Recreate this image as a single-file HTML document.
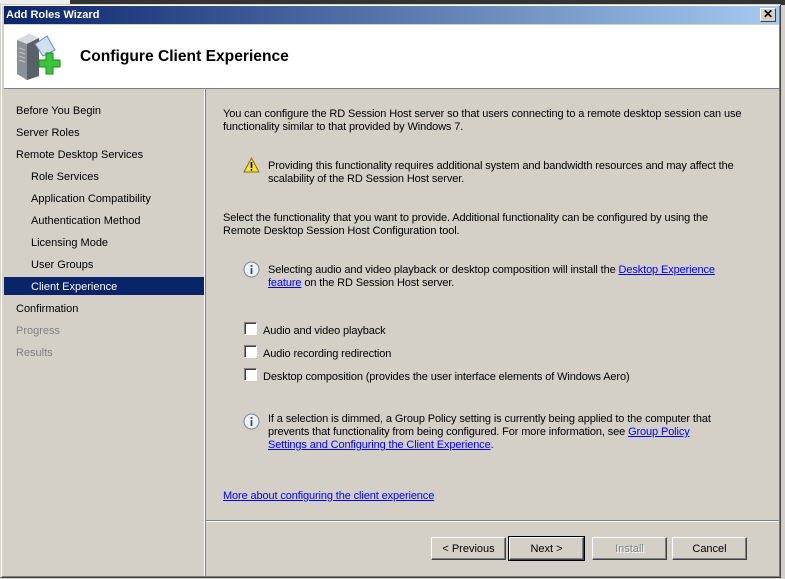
<!DOCTYPE html>
<html><head><style>
*{margin:0;padding:0;box-sizing:border-box}
body{width:785px;height:579px;background:#d4d0c8;font-family:"Liberation Sans",Tahoma,sans-serif;font-size:11px;color:#000;position:relative;overflow:hidden}
.a{position:absolute;white-space:nowrap;line-height:13px}
.r{font-size:11px;letter-spacing:-0.12px}
a,.l{color:#0000ff;text-decoration:underline}
.g{color:#808080}
.cb{position:absolute;width:13px;height:13px;background:#fff;border:1px solid;border-color:#808080 #fff #fff #808080;box-shadow:inset 1px 1px 0 #404040}
.btn{position:absolute;top:537px;height:23px;background:#d4d0c8;border:1px solid;border-color:#fff #404040 #404040 #fff;box-shadow:inset -1px -1px 0 #808080;text-align:center;line-height:22px;font-size:11px}
</style></head><body>
<div style="position:absolute;left:0;top:0;width:785px;height:5px;background:#333"></div>
<div style="position:absolute;left:0;top:0;width:70px;height:5px;background:#eee"></div>
<div style="position:absolute;left:0;top:4px;width:781px;height:574px;background:#d4d0c8;border:1px solid;border-color:#d4d0c8 #404040 #404040 #d4d0c8;box-shadow:inset 1px 1px 0 #fff,inset -1px -1px 0 #808080"></div>
<div style="position:absolute;left:4px;top:6px;width:775px;height:18px;background:linear-gradient(90deg,#0a246a,#a6caf0)"></div>
<div class="a" style="left:6px;top:9px;color:#fff;font-weight:bold;font-size:11px">Add Roles Wizard</div>
<div style="position:absolute;left:760px;top:8px;width:16px;height:14px;background:#d4d0c8;border:1px solid;border-color:#fff #404040 #404040 #fff;text-align:center;font-size:12px;line-height:11px;font-weight:bold">✕</div>
<div style="position:absolute;left:4px;top:25px;width:775px;height:63px;background:#fff"></div>
<svg style="position:absolute;left:14px;top:30px" width="50" height="52" viewBox="0 0 48 52">
<path d="M2 10 L14 4 L24 8 L24 46 L12 50 L2 44Z" fill="#8a9098"/>
<path d="M2 10 L14 4 L24 8 L12 14Z" fill="#d8dce0"/>
<path d="M12 14 L24 8 L24 46 L12 50Z" fill="#5a6068"/>
<g stroke="#c0c4c8" stroke-width="1"><line x1="4" y1="18" x2="10" y2="20"/><line x1="4" y1="22" x2="10" y2="24"/><line x1="4" y1="26" x2="10" y2="28"/><line x1="4" y1="30" x2="10" y2="32"/></g>
<path d="M20 14 L32 6 L40 20 L28 26Z" fill="#cfe0f0" stroke="#6a8ab0"/>
<path d="M24 30 h7 v-7 h7 v7 h7 v7 h-7 v7 h-7 v-7 h-7Z" fill="#3cc43c" stroke="#1a8a1a"/>
</svg>
<div class="a" style="left:80px;top:48px;font-size:15.6px;font-weight:bold;line-height:18px">Configure Client Experience</div>
<div style="position:absolute;left:4px;top:88px;width:775px;height:1px;background:#808080"></div>
<div style="position:absolute;left:204px;top:89px;width:1px;height:487px;background:#fff"></div>
<div style="position:absolute;left:205px;top:89px;width:1px;height:487px;background:#808080"></div>
<div class="a" style="left:16px;top:105px">Before You Begin</div>
<div class="a" style="left:16px;top:127px">Server Roles</div>
<div class="a" style="left:16px;top:149px">Remote Desktop Services</div>
<div class="a" style="left:31px;top:171px">Role Services</div>
<div class="a" style="left:31px;top:193px">Application Compatibility</div>
<div class="a" style="left:31px;top:215px">Authentication Method</div>
<div class="a" style="left:31px;top:237px">Licensing Mode</div>
<div class="a" style="left:31px;top:259px">User Groups</div>
<div style="position:absolute;left:4px;top:277px;width:200px;height:18px;background:#0a246a"></div>
<div class="a" style="left:31px;top:281px;color:#fff">Client Experience</div>
<div class="a" style="left:16px;top:303px">Confirmation</div>
<div class="a g" style="left:16px;top:325px">Progress</div>
<div class="a g" style="left:16px;top:347px">Results</div>
<div class="a r" style="left:223px;top:108px">You can configure the RD Session Host server so that users connecting to a remote desktop session can use<br>functionality similar to that provided by Windows 7.</div>
<svg style="position:absolute;left:243px;top:157px" width="17" height="16"><path d="M8.5 1 L16 15 H1Z" fill="#f8e040" stroke="#8a7000"/><rect x="7.7" y="5" width="1.6" height="6" fill="#000"/><rect x="7.7" y="12" width="1.6" height="1.6" fill="#000"/></svg>
<div class="a r" style="left:268px;top:160px">Providing this functionality requires additional system and bandwidth resources and may affect the<br>scalability of the RD Session Host server.</div>
<div class="a r" style="left:223px;top:212px">Select the functionality that you want to provide. Additional functionality can be configured by using the<br>Remote Desktop Session Host Configuration tool.</div>
<svg style="position:absolute;left:243px;top:261px" width="17" height="17"><circle cx="8.5" cy="8.5" r="7.5" fill="#f0f2f6" stroke="#7080a0"/><rect x="7.6" y="7" width="1.8" height="6" fill="#2a4a80"/><rect x="7.6" y="4" width="1.8" height="1.8" fill="#2a4a80"/></svg>
<div class="a r" style="left:268px;top:264px">Selecting audio and video playback or desktop composition will install the <span class="l">Desktop Experience</span><br><span class="l">feature</span> on the RD Session Host server.</div>
<div class="cb" style="left:244px;top:322px"></div>
<div class="a r" style="left:263px;top:325px">Audio and video playback</div>
<div class="cb" style="left:244px;top:345px"></div>
<div class="a r" style="left:263px;top:348px">Audio recording redirection</div>
<div class="cb" style="left:244px;top:368px"></div>
<div class="a r" style="left:263px;top:371px">Desktop composition (provides the user interface elements of Windows Aero)</div>
<svg style="position:absolute;left:243px;top:413px" width="17" height="17"><circle cx="8.5" cy="8.5" r="7.5" fill="#f0f2f6" stroke="#7080a0"/><rect x="7.6" y="7" width="1.8" height="6" fill="#2a4a80"/><rect x="7.6" y="4" width="1.8" height="1.8" fill="#2a4a80"/></svg>
<div class="a r" style="left:268px;top:413px">If a selection is dimmed, a Group Policy setting is currently being applied to the computer that<br>prevents that functionality from being configured. For more information, see <span class="l">Group Policy</span><br><span class="l">Settings and Configuring the Client Experience</span>.</div>
<div class="a l r" style="left:223px;top:490px">More about configuring the client experience</div>
<div style="position:absolute;left:206px;top:520px;width:573px;height:1px;background:#808080"></div>
<div style="position:absolute;left:206px;top:521px;width:573px;height:1px;background:#fff"></div>
<div class="btn" style="left:431px;width:75px">&lt; Previous</div>
<div class="btn" style="left:509px;width:75px;outline:1px solid #000">Next &gt;</div>
<div class="btn g" style="left:592px;width:75px;text-shadow:1px 1px 0 #fff">Install</div>
<div class="btn" style="left:672px;width:75px">Cancel</div>
</body></html>
